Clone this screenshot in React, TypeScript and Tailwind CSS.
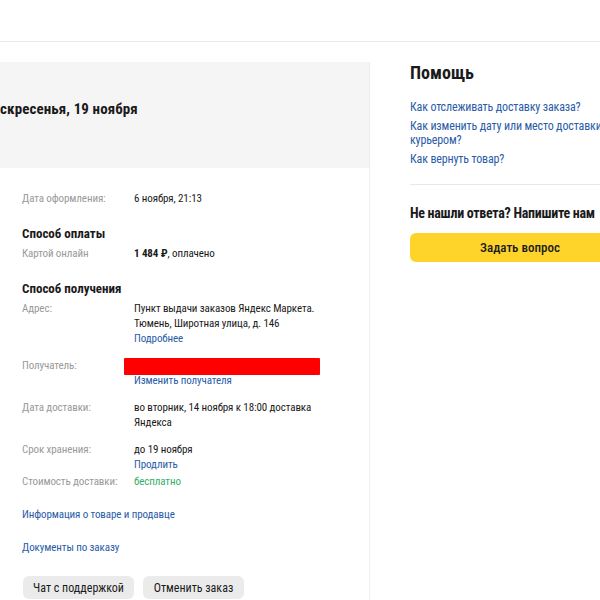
import React from "react";

const Row = ({ label, children, className = "" }: { label: string; children: React.ReactNode; className?: string }) => (
  <div className={"flex text-[11px] leading-[15px] tracking-[-0.1px] " + className}>
    <div className="w-[112px] shrink-0 text-[#999999]">{label}</div>
    <div className="text-[#1a1a1a] relative">{children}</div>
  </div>
);

export default function App() {
  return (
    <div className="w-[600px] h-[600px] overflow-hidden bg-white relative font-['Roboto','Noto_Sans',sans-serif] font-stretch-semi-condensed">
      <div className="h-[42px] border-b border-[#e8e8e8]" />
      <div className="flex pt-[20px]">
        <div className="w-[370px] shrink-0 border-r border-[#efefef] h-[600px]">
          <div className="h-[106px] bg-[#f5f5f5] pt-[37px]">
            <div className="text-[15px] leading-[20px] font-bold text-[#1a1a1a] whitespace-nowrap tracking-[0.1px]">
              скресенья, 19 ноября
            </div>
          </div>
          <div className="pl-[22px] pt-[23px]">
            <Row label="Дата оформления:">6 ноября, 21:13</Row>
            <div className="mt-[19px] text-[13px] leading-[17px] font-bold text-[#1a1a1a]">Способ оплаты</div>
            <Row label="Картой онлайн" className="mt-[4px]">
              <span className="font-bold">1 484 ₽</span>, оплачено
            </Row>
            <div className="mt-[19px] text-[13px] leading-[17px] font-bold text-[#1a1a1a]">Способ получения</div>
            <Row label="Адрес:" className="mt-[4px]">
              <div>Пункт выдачи заказов Яндекс Маркета.</div>
              <div>Тюмень, Широтная улица, д. 146</div>
              <div className="text-[#2a5ca8]">Подробнее</div>
            </Row>
            <Row label="Получатель:" className="mt-[12px]">
              <div className="h-[15px]" />
              <div className="absolute left-[-10px] top-0 w-[196px] h-[17px] bg-[#ff0000] rounded-[1px]" />
              <div className="text-[#2a5ca8]">Изменить получателя</div>
            </Row>
            <Row label="Дата доставки:" className="mt-[12px]">
              <div>во вторник, 14 ноября к 18:00 доставка</div>
              <div>Яндекса</div>
            </Row>
            <Row label="Срок хранения:" className="mt-[12px]">
              <div>до 19 ноября</div>
              <div className="text-[#2a5ca8]">Продлить</div>
            </Row>
            <Row label="Стоимость доставки:" className="mt-[2px]">
              <div className="text-[#34b06a]">бесплатно</div>
            </Row>
            <div className="mt-[18px] text-[11px] leading-[15px] tracking-[-0.1px] text-[#2a5ca8]">Информация о товаре и продавце</div>
            <div className="mt-[18px] text-[11px] leading-[15px] tracking-[-0.1px] text-[#2a5ca8]">Документы по заказу</div>
            <div className="mt-[21px] flex gap-[9px] pl-[1px]">
              <div className="h-[23px] w-[111px] rounded-[6px] bg-[#ebebeb] flex items-center justify-center text-[12px] text-[#1a1a1a]">
                Чат с поддержкой
              </div>
              <div className="h-[23px] w-[101px] rounded-[6px] bg-[#ebebeb] flex items-center justify-center text-[12px] text-[#1a1a1a]">
                Отменить заказ
              </div>
            </div>
          </div>
        </div>
        <div className="pl-[40px] w-[262px] shrink-0">
          <div className="text-[18px] leading-[22px] font-bold text-[#1a1a1a]">Помощь</div>
          <div className="mt-[16px] flex flex-col gap-[5px] text-[12px] leading-[14px] tracking-[-0.15px] text-[#2a5ca8] whitespace-nowrap">
            <div>Как отслеживать доставку заказа?</div>
            <div>
              <div>Как изменить дату или место доставки</div>
              <div>курьером?</div>
            </div>
            <div>Как вернуть товар?</div>
          </div>
          <div className="mt-[18px] border-t border-[#e8e8e8] w-[260px]" />
          <div className="mt-[19px] text-[14px] leading-[18px] font-bold text-[#1a1a1a] whitespace-nowrap tracking-[-0.3px]">
            Не нашли ответа? Напишите нам
          </div>
          <div className="mt-[11px] h-[29px] w-[220px] rounded-[6px] bg-[#fed42b] flex items-center justify-center text-[13px] font-medium text-[#1a1a1a]">
            Задать вопрос
          </div>
        </div>
      </div>
    </div>
  );
}
